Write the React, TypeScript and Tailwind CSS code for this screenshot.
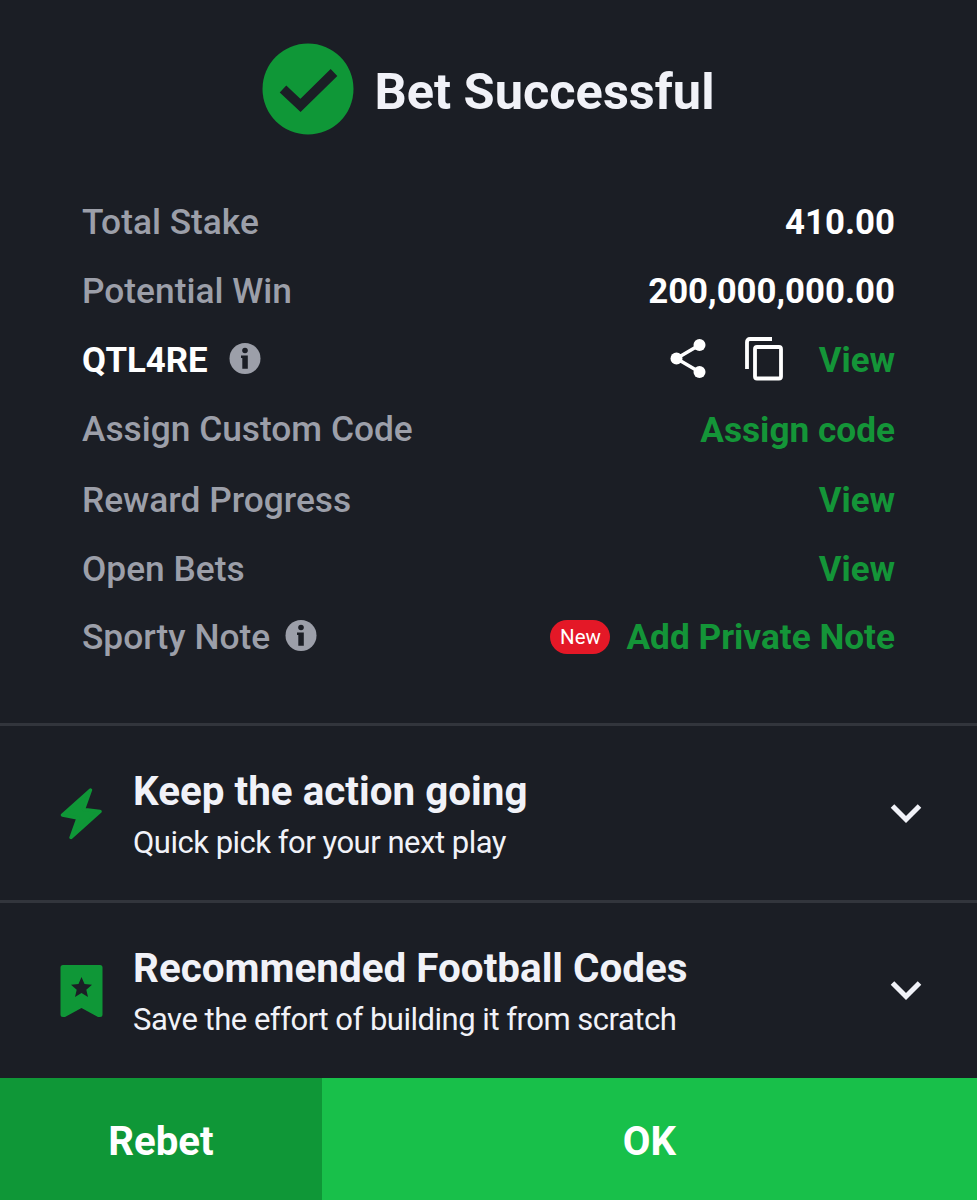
import type { ReactNode } from "react";

function InfoIcon() {
  return (
    <svg width="32" height="32" viewBox="0 0 32 32" className="relative -top-px shrink-0">
      <circle cx="16" cy="15.500" r="15.5" fill="#9c9fa9" />
      <circle cx="16" cy="7.500" r="2.8" fill="#1b1e25" />
      <path d="M12 12.500h6.800v13.200h-5.500V15H12z" fill="#1b1e25" />
    </svg>
  );
}

function Row({ label, className = "h-[69px]", children }: { label: ReactNode; className?: string; children: ReactNode }) {
  return (
    <div className={`flex items-center justify-between ${className}`}>
      <div className="flex items-center text-[35.3px] text-[#9c9fa9]">{label}</div>
      <div className="flex items-center font-bold text-[#149538]">{children}</div>
    </div>
  );
}

function Chevron() {
  return (
    <svg width="32" height="22" viewBox="0 0 32 22" fill="none" stroke="#f1f2f8" strokeWidth="5">
      <path d="M2.500 3L16 16.500 29.500 3" />
    </svg>
  );
}

function Panel({ icon, title, text }: { icon: ReactNode; title: string; text: string }) {
  return (
    <section className="flex h-[177px] items-center border-t-3 border-[#32353c] pt-px pr-[55px] pl-[60px]">
      <div className="w-[73px] shrink-0">{icon}</div>
      <div className="flex-1 pt-[6px]">
        <h2 className="text-[40.4px] font-bold leading-[52px]">{title}</h2>
        <p className="text-[31px] leading-[50px] tracking-[-0.49px]">{text}</p>
      </div>
      <Chevron />
    </section>
  );
}

export default function App() {
  return (
    <main className="flex h-[1200px] w-[977px] flex-col overflow-hidden bg-[#1b1e25] font-['Roboto',sans-serif] whitespace-nowrap text-[#f1f2f8]">
      <header className="flex h-[188px] items-start justify-center pt-[43px]">
        <svg width="92" height="92" viewBox="0 0 92 92">
          <circle cx="46" cy="46" r="45.5" fill="#0f9737" />
          <path d="M21 46L38.500 62.500 72 29.500" fill="none" stroke="#1b1e25" strokeWidth="9.500" />
        </svg>
        <h1 className="ml-[20px] text-[50.5px] font-bold leading-[98px]">Bet Successful</h1>
      </header>

      <div className="h-[535px] px-[82px] text-[34.8px] font-medium">
        <Row label="Total Stake">
          <span className="text-white">410.00</span>
        </Row>
        <Row label="Potential Win">
          <span className="text-white">200,000,000.00</span>
        </Row>
        <Row
          className="h-[68px]"
          label={
            <>
              <span className="mr-[21px] text-[34.8px] font-bold text-white">QTL4RE</span>
              <InfoIcon />
            </>
          }
        >
          <svg width="36" height="40" viewBox="0 0 36 40" fill="#fff" className="relative -top-px mr-[39px]">
            <path d="M29.500 6L6.500 19.500l23 13.500" fill="none" stroke="#fff" strokeWidth="3.5" />
            <circle cx="29.500" cy="6" r="6" />
            <circle cx="6.500" cy="19.500" r="6" />
            <circle cx="29.500" cy="33" r="6" />
          </svg>
          <svg width="38" height="44" viewBox="0 0 38 44" fill="none" stroke="#fff" strokeWidth="3.8" className="relative -top-px mr-[36px]">
            <path d="M2 32V5q0-3 3-3h22" />
            <rect x="10" y="10" width="26" height="31.500" rx="2" />
          </svg>
          <span>View</span>
        </Row>
        <Row label="Assign Custom Code" className="h-[71px]">
          <span className="pt-[2px] text-[35.2px]">Assign code</span>
        </Row>
        <Row label="Reward Progress" className="h-[70px]">View</Row>
        <Row label="Open Bets" className="h-[68px]">View</Row>
        <Row
          className="h-[68px]"
          label={
            <>
              <span className="mr-[15px]">Sporty Note</span>
              <InfoIcon />
            </>
          }
        >
          <span className="mr-[16px] flex h-[34px] w-[60px] items-center justify-center rounded-full bg-[#e41827] text-[20.5px] font-normal text-white">
            New
          </span>
          <span className="text-[35.2px]">Add Private Note</span>
        </Row>
      </div>

      <Panel
        title="Keep the action going"
        text="Quick pick for your next play"
        icon={
          <svg width="42" height="52" viewBox="0 0 42 52" fill="#0f9737" stroke="#0f9737" strokeWidth="3.4" strokeLinejoin="round">
            <path d="M30.500 2L2.500 27l15.500 3-7 19.500L40 23.500 23.500 21.500z" />
          </svg>
        }
      />
      <Panel
        title="Recommended Football Codes"
        text="Save the effort of building it from scratch"
        icon={
          <svg width="43" height="52" viewBox="0 0 43 52" fill="#0f9737">
            <path d="M3 0h37q2.500 0 2.500 2.500v47q0 2.500-2.500 2.500h-2L21.500 43 5 52H3q-2.500 0-2.500-2.500v-47Q.5 0 3 0z" />
            <path d="M21.500 12l3 7 7.500.7-5.700 5 1.700 7.300-6.500-3.900-6.500 3.900 1.700-7.300-5.700-5 7.500-.7z" fill="#1b1e25" />
          </svg>
        }
      />

      <footer className="mt-px flex flex-1 text-[40.2px] font-bold text-white">
        <button className="w-[322px] bg-[#0f9737] pt-[6px]">Rebet</button>
        <button className="flex-1 bg-[#18c04a] pt-[6px]">OK</button>
      </footer>
    </main>
  );
}
